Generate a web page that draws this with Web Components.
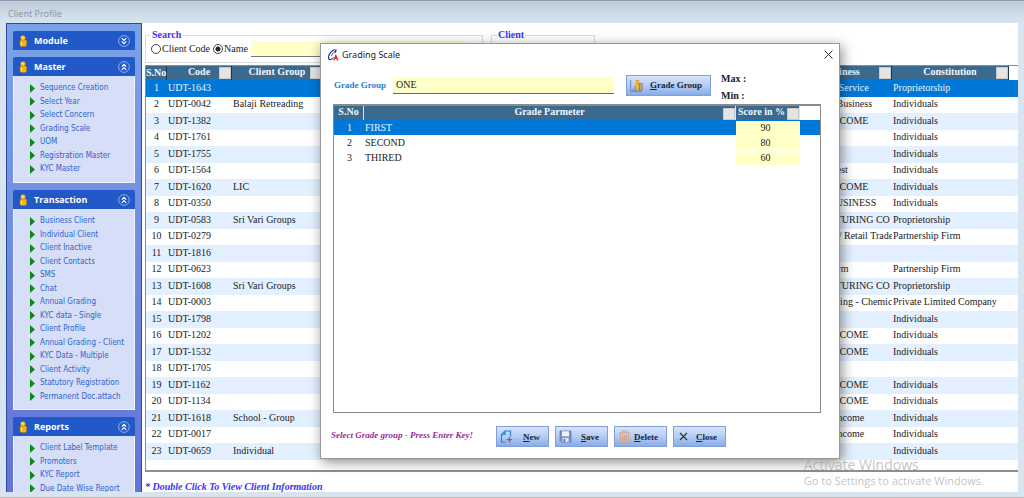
<!DOCTYPE html>
<html lang="en">
<head>
<meta charset="utf-8">
<title>Client Profile</title>
<style>
  body { margin: 0; font: 10px/12px "Liberation Serif", serif; color: #222; }
</style>
</head>
<body>
<client-window heading="Client Profile">
  <side-menu slot="side">
    <menu-group label="Module" collapsed></menu-group>
    <menu-group label="Master" items="Sequence Creation|Select Year|Select Concern|Grading Scale|UOM|Registration Master|KYC Master"></menu-group>
    <menu-group label="Transaction" items="Business Client|Individual Client|Client Inactive|Client Contacts|SMS|Chat|Annual Grading|KYC data - Single|Client Profile|Annual Grading - Client|KYC Data - Multiple|Client Activity|Statutory Registration|Permanent Doc.attach"></menu-group>
    <menu-group label="Reports" items="Client Label Template|Promoters|KYC Report|Due Date Wise Report"></menu-group>
  </side-menu>
  <client-search></client-search>
  <client-grid></client-grid>
  <foot-note>* Double Click To View Client Information</foot-note>
</client-window>
<grading-dialog heading="Grading Scale"></grading-dialog>
<activation-note></activation-note>

<script>
const define = (name, html, setup) => customElements.define(name, class extends HTMLElement {
  constructor() {
    super();
    this.attachShadow({ mode: 'open' });
  }
  connectedCallback() {
    this.shadowRoot.innerHTML = html;
    if (setup) setup(this, this.shadowRoot);
  }
});

define('client-window', `
<style>
  :host { display: flex; flex-direction: column; height: 100vh; box-sizing: border-box; padding: 0 6px;
    background: linear-gradient(#bccbd9, #d8e5f1 22px, #d8e5f1); border-top: 1px solid #8f9aa5; border-bottom: 1px solid #b4b8bd; overflow: hidden; }
  header { flex: none; height: 22px; font: 9px/26px "Noto Sans", sans-serif; color: #9298a0; padding-left: 2px; }
  .body { flex: 1; min-height: 0; display: flex; margin-bottom: 5px; background: #fff; }
  ::slotted(side-menu) { flex: none; }
  main { flex: 1; min-width: 0; display: flex; flex-direction: column; padding: 6px 0 0 3px; }
</style>
<header></header>
<div class="body"><slot name="side"></slot><main><slot></slot></main></div>`,
(el, root) => { root.querySelector('header').textContent = el.getAttribute('heading'); });

define('side-menu', `
<style>
  :host { display: flex; flex-direction: column; gap: 7px; width: 136px; box-sizing: border-box; padding: 7px 6px 0;
    border: solid #2b4a9c; border-width: 1px 1px 0 1px; background: linear-gradient(#7ba2e7, #6375d6); overflow: hidden; }
</style><slot></slot>`);

define('menu-group', `
<style>
  :host { display: block; flex: none; }
  button { display: flex; align-items: center; width: 100%; height: 19px; border: 0; border-radius: 2px 2px 0 0; padding: 0 5px 0 6px;
    background: #2159c9; color: #fff; font: bold 9px/12px "Open Sans", sans-serif; }
  button span { flex: 1; text-align: left; padding-left: 7px; }
  .body { background: #d6dff7; border: solid #f0f4ff; border-width: 0 1px 1px; padding: 5px 0 6px 16px; }
  a { display: flex; align-items: center; gap: 5px; height: 13px; color: #2f62cd; text-decoration: none; font: 8px/12px "DejaVu Sans Condensed", "DejaVu Sans", sans-serif; font-stretch: condensed; white-space: nowrap; }
  a:nth-child(odd) { height: 14px; }
  :host([collapsed]) .body { display: none; }
  :host([collapsed]) .arrows { transform: rotate(180deg); }
</style>
<button>
  <svg width="8" height="12" viewBox="0 0 8 12"><rect x="1" y="5" width="6.6" height="6.4" rx="1.4" fill="#f2b51d" stroke="#b97b08" stroke-width=".5"/><path d="M2.5 7v3.6" stroke="#ffe78a"/><circle cx="4" cy="3" r="2.4" fill="#ffc933" stroke="#b97b08" stroke-width=".5"/><circle cx="3.3" cy="2.3" r=".8" fill="#fff0a8"/></svg>
  <span></span>
  <svg class="arrows" width="12" height="12" viewBox="0 0 12 12" fill="none"><circle cx="6" cy="6" r="5.4" stroke="#9db8ee" stroke-width=".9"/><path d="M3.8 5.6 6 3.4l2.2 2.2M3.8 8.8 6 6.6l2.2 2.2" stroke="#fff" stroke-width="1.2"/></svg>
</button>
<div class="body"></div>`,
(el, root) => {
  root.querySelector('span').textContent = el.getAttribute('label');
  root.querySelector('.body').innerHTML = (el.getAttribute('items') || '').split('|').map(t =>
    `<a href="#"><svg width="5" height="9" viewBox="0 0 5 9"><path d="M0 0 5 4.5 0 9z" fill="#0b8a12"/></svg>${t}</a>`).join('');
});

define('client-search', `
<style>
  :host { display: flex; gap: 8px; height: 36px; }
  fieldset { margin: 0; padding: 0 5px; border: 1px solid #dcdcdc; box-sizing: border-box; height: 34px; min-width: 0; }
  legend { padding: 0 1px; line-height: 12px; font-weight: bold; color: #3a33f5; }
  .find { width: 338px; }
  .client { width: 104px; }
  .row { display: flex; align-items: center; height: 16px; }
  label { display: flex; align-items: center; gap: 1px; margin-right: 3px; white-space: nowrap; }
  input[type=radio] { appearance: none; margin: 0; width: 10px; height: 10px; border: 1px solid #444; border-radius: 50%; background: #fff; }
  input[type=radio]:checked { background: radial-gradient(circle, #222 0 2px, #fff 3px); }
  input[type=text] { flex: 1; min-width: 0; height: 16px; box-sizing: border-box; border: 0; border-bottom: 1px solid #777; background: #ffffc8; padding: 0 3px; margin-right: 12px; font: inherit; }
</style>
<fieldset class="find"><legend>Search</legend>
  <div class="row"><label><input type="radio" name="by">Client Code</label><label><input type="radio" name="by" checked>Name</label><input type="text" aria-label="Search text"></div>
</fieldset>
<fieldset class="client"><legend>Client</legend></fieldset>`);

const clients = [
  ['UDT-1643', '', 'al Service', 'Proprietorship'],
  ['UDT-0042', 'Balaji Retreading', 'g Business', 'Individuals'],
  ['UDT-1382', '', 'INCOME', 'Individuals'],
  ['UDT-1761', '', '', 'Individuals'],
  ['UDT-1755', '', '', 'Individuals'],
  ['UDT-1564', '', 'erest', 'Individuals'],
  ['UDT-1620', 'LIC', 'INCOME', 'Individuals'],
  ['UDT-0350', '', 'BUSINESS', 'Individuals'],
  ['UDT-0583', 'Sri Vari Groups', 'CTURING CO', 'Proprietorship'],
  ['UDT-0279', '', 'le / Retail Trade', 'Partnership Firm'],
  ['UDT-1816', '', '', ''],
  ['UDT-0623', '', 'Firm', 'Partnership Firm'],
  ['UDT-1608', 'Sri Vari Groups', 'CTURING CO', 'Proprietorship'],
  ['UDT-0003', '', 'turing - Chemic', 'Private Limited Company'],
  ['UDT-1798', '', '', 'Individuals'],
  ['UDT-1202', '', 'INCOME', 'Individuals'],
  ['UDT-1532', '', 'INCOME', 'Individuals'],
  ['UDT-1705', '', '', ''],
  ['UDT-1162', '', 'INCOME', 'Individuals'],
  ['UDT-1134', '', 'INCOME', 'Individuals'],
  ['UDT-1618', 'School - Group', 't Income', 'Individuals'],
  ['UDT-0017', '', 't Income', 'Individuals'],
  ['UDT-0659', 'Individual', '', 'Individuals']
];

define('client-grid', `
<style>
  :host { display: block; flex: 1; min-height: 0; border: 1px solid #8e8e8e; border-width: 1px 0 2px 1px; overflow: hidden; }
  table { width: 100%; border-collapse: separate; border-spacing: 0; table-layout: fixed; }
  th { height: 14px; padding: 0; background: #3a6a90; color: #f2f6fa; box-sizing: border-box; border-right: 1px solid #20354f; }
  th.end { background: #fff; border: 0; }
  .h { display: flex; height: 14px; line-height: 12px; white-space: nowrap; padding-left: 12px; }
  .left .h { padding-left: 0; }
  .h span { flex: 1; }
  .h i { width: 12px; height: 12px; margin-top: 1px; background: #e4e4e4; border: 1px solid #c9c9c9; box-sizing: border-box; }
  td { height: 16px; padding: 0 0 2px; box-sizing: border-box; line-height: 14px; white-space: nowrap; overflow: hidden; }
  tr:nth-child(odd) td { height: 17px; background: #e3f0ff; }
  tbody tr:first-child td { background: #0078d7; color: #e8f2fc; }
  td:first-child { text-align: center; }
  td:nth-child(2), td:nth-child(3), td:nth-child(6) { padding-left: 1px; }
  td:nth-child(5) { padding-left: 6px; }
  th.left span { text-align: left; }
</style>
<table>
  <colgroup><col style="width:21px"><col style="width:65px"><col style="width:91px"><col><col style="width:69px"><col style="width:117px"><col style="width:9px"></colgroup>
  <thead><tr><th>S.No</th><th><div class="h"><span>Code</span><i></i></div></th><th><div class="h"><span>Client Group</span><i></i></div></th><th></th><th class="left"><div class="h"><span>Business</span><i></i></div></th><th><div class="h"><span>Constitution</span><i></i></div></th><th class="end"></th></tr></thead>
  <tbody></tbody>
</table>`,
(el, root) => {
  root.querySelector('tbody').innerHTML = clients.map(([code, group, business, kind], i) =>
    `<tr><td>${i + 1}</td><td>${code}</td><td>${group}</td><td></td><td>${business}</td><td>${kind}</td><td></td></tr>`).join('');
});

define('foot-note', `
<style>:host { display: block; flex: none; height: 20px; line-height: 29px; font-style: italic; font-weight: bold; color: #3a33f5; white-space: nowrap; }</style><slot></slot>`);

define('tool-button', `
<style>
  :host { display: block; }
  button { display: flex; align-items: center; width: 100%; height: 21px; padding: 0 8px 0 3px; border: 1px solid #7f9fd6; background: linear-gradient(#d6e4fb, #b4cdf4 50%, #88ace8);
    font: bold 9px/12px "Liberation Serif", serif; color: #1c2434; white-space: nowrap; }
  span { flex: 1; text-align: right; }
</style>
<button><slot name="icon"></slot><span><slot></slot></span></button>`);

define('grading-dialog', `
<style>
  :host { position: absolute; left: 320px; top: 43px; width: 520px; box-sizing: border-box; border: 1px solid #999; background: #fff; padding: 0 18px 11px 12px; box-shadow: 2px 3px 12px rgba(0,0,0,.45); }
  header { display: flex; align-items: center; height: 21px; gap: 3px; margin: 0 -12px 0 -5px; font: 9px/12px "Noto Sans", sans-serif; }
  header span { flex: 1; }
  header button { display: flex; border: 0; padding: 0; background: none; }
  .top { display: flex; height: 39px; align-items: center; padding-top: 1px; box-sizing: border-box; }
  .top label { width: 60px; font: bold 9px/12px "Liberation Serif", serif; color: #1e7fd8; padding-left: 1px; box-sizing: border-box; }
  input { box-sizing: border-box; font: inherit; color: #222; border: 0; background: #ffffc8; }
  .top input { width: 221px; height: 17px; padding: 0 3px; border-bottom: 1px solid #666; }
  .top tool-button { width: 85px; margin: 0 10px 0 12px; }
  .limits { font-weight: bold; line-height: 17px; padding-top: 4px; }
  .grid { height: 309px; box-sizing: border-box; border: 1px solid #8a8a8a; border-top-width: 2px; }
  table { width: 100%; border-spacing: 0; table-layout: fixed; }
  th { height: 14px; padding: 0; background: #3a6a90; color: #f2f6fa; border-right: 1px solid #d9e4ee; box-sizing: border-box; }
  th.end { background: #fff; border: 0; }
  .h { display: flex; height: 14px; line-height: 11px; white-space: nowrap; }
  .mid .h { padding-left: 12px; }
  .h span { flex: 1; }
  .h i { width: 12px; height: 12px; margin-top: 2px; background: #e4e4e4; border: 1px solid #c9c9c9; box-sizing: border-box; }
  td { height: 15px; padding: 0 0 0 1px; line-height: 14px; box-sizing: border-box; }
  td:first-child { text-align: center; }
  td:nth-child(3) { padding: 0; }
  td input { display: block; width: 64px; height: 14px; padding: 0 5px 0 0; text-align: center; }
  tbody tr:first-child td { background: #0078d7; color: #e8f2fc; }
  footer { display: flex; gap: 6px; align-items: center; margin-top: 13px; margin-left: -2px; height: 21px; }
  footer p { flex: 1; margin: 0; white-space: nowrap; font: italic bold 9px/12px "Liberation Serif", serif; color: #9a2a9a; padding-bottom: 4px; }
  footer tool-button { width: 53px; }
  footer tool-button:last-child { margin-right: 95px; }
</style>
<header>
  <svg width="11" height="12" viewBox="0 0 11 12" fill="none"><path d="M6.8 3.8C8.800 1.500 7.300-.2 4.800 1.500 1.800 3.500-.8 8.300 1.200 10.200 2.800 11.300 4.300 10 5.500 8.500" stroke="#1c3f8c" stroke-width="1.200"/><path d="M3.500 7c1-2.600 3-5.200 5.500-6" stroke="#1c3f8c" stroke-width=".8"/><path d="M5.200 11.500 7.800 4.800l2.700 6.700H8.900l-.4-1.500H7l-.4 1.500z" fill="#e8262c"/></svg>
  <span></span>
  <button aria-label="Close window"><svg width="9" height="9" viewBox="0 0 9 9"><path d="M.5.5l8 8m0-8-8 8" stroke="#333" fill="none"/></svg></button>
</header>
<div class="top">
  <label for="group">Grade Group</label><input id="group" value="ONE">
  <tool-button><svg slot="icon" width="13" height="13" viewBox="0 0 13 13"><path d="M.7 1v11M3 12V9.500M5 12V7" stroke="#7e93b8" stroke-width="1.200"/><path d="M0 12.200h12" stroke="#6b7da0"/><rect x="6" y="1.500" width="2.700" height="9.500" fill="#f8c02c" stroke="#d58e14" stroke-width=".6"/><rect x="9.500" y="4.500" width="2.600" height="6.500" fill="#cfa27a" stroke="#94623a" stroke-width=".6"/></svg><u>G</u>rade Group</tool-button>
  <div class="limits">Max :<br>Min :</div>
</div>
<div class="grid"><table>
  <colgroup><col style="width:30px"><col><col style="width:64px"><col style="width:20px"></colgroup>
  <thead><tr><th><div class="h"><span>S.No</span></div></th><th class="mid"><div class="h"><span>Grade Parmeter</span><i></i></div></th><th><div class="h"><span>Score in %</span><i></i></div></th><th class="end"></th></tr></thead>
  <tbody>
    <tr><td>1</td><td>FIRST</td><td><input value="90" aria-label="Score for FIRST"></td><td></td></tr>
    <tr><td>2</td><td>SECOND</td><td><input value="80" aria-label="Score for SECOND"></td><td></td></tr>
    <tr><td>3</td><td>THIRED</td><td><input value="60" aria-label="Score for THIRED"></td><td></td></tr>
  </tbody>
</table></div>
<footer>
  <p>Select Grade group - Press Enter Key!</p>
  <tool-button><svg slot="icon" width="13" height="13" viewBox="0 0 13 13" fill="none"><path d="M5.500 12H1.500V4.500L5 1h5.500v5.500M5 1v3.500H1.500" stroke="#1d86e0" stroke-width="1.200"/><path d="M9.500 7v5.500M6.700 9.700h5.600" stroke="#ee3344" stroke-width="1.200"/></svg><u>N</u>ew</tool-button>
  <tool-button><svg slot="icon" width="13" height="13" viewBox="0 0 13 13"><path d="M1 1h11v11H2.500L1 10.500z" fill="#8093c8" stroke="#5f6fae" stroke-width=".7"/><rect x="3" y="1.300" width="7" height="5" fill="#eef3fb"/><rect x="3.500" y="8" width="6" height="4" fill="#dfe5ee"/><rect x="4.500" y="9" width="1.700" height="3" fill="#5f6fae"/></svg><u>S</u>ave</tool-button>
  <tool-button><svg slot="icon" width="13" height="13" viewBox="0 0 13 13" fill="none" stroke="#d9a184" stroke-width="1.100"><path d="M1 3h11M4.500 3V1h4v2M2.300 3v9.300h8.400V3M4.700 5v5.500M6.500 5v5.500M8.300 5v5.500"/></svg><u>D</u>elete</tool-button>
  <tool-button><svg slot="icon" width="13" height="13" viewBox="0 0 13 13"><path d="M3 3l7 7m0-7-7 7" stroke="#333" fill="none" stroke-width="1.200"/></svg><u>C</u>lose</tool-button>
</footer>`,
(el, root) => { root.querySelector('header span').textContent = el.getAttribute('heading'); });

define('activation-note', `
<style>
  :host { position: absolute; right: 40px; bottom: 9px; color: rgba(160,160,160,.65); font: 11px/16px "Open Sans", sans-serif; white-space: nowrap; pointer-events: none; }
  b { display: block; font-weight: normal; font-size: 14px; line-height: 17px; }
</style><b>Activate Windows</b>Go to Settings to activate Windows.`);
</script>
</body>
</html>
